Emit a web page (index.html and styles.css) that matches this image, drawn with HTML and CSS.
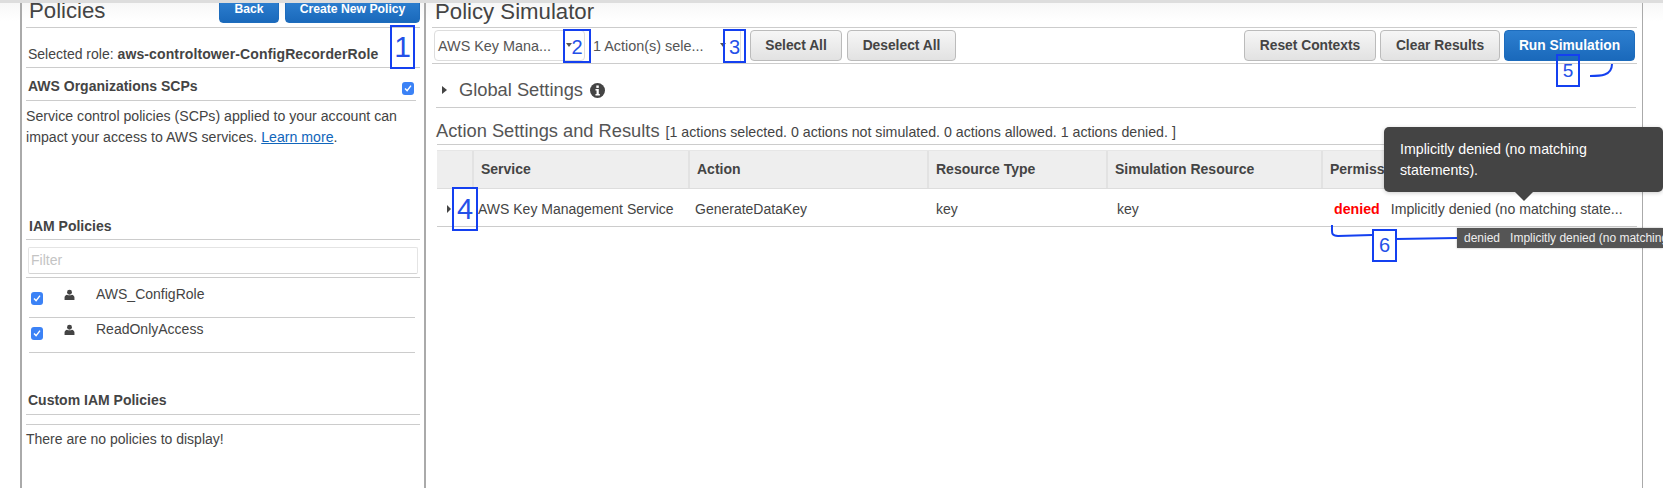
FILE: index.html
```html
<!DOCTYPE html>
<html lang="en">
<head>
<meta charset="utf-8">
<title>Policy Simulator</title>
<link rel="stylesheet" href="styles.css">
</head>
<body>
<div class="page">
  <div class="columns">
    <aside class="left">
      <div class="head left-head">
        <h1 class="title">Policies</h1>
        <div class="head-btns">
          <button class="btn primary back">Back</button>
          <button class="btn primary create">Create New Policy</button>
        </div>
      </div>
      <div class="role">Selected role: <b>aws-controltower-ConfigRecorderRole</b></div>
      <div class="scp-head"><b>AWS Organizations SCPs</b><span class="check scp-check"><svg viewBox="0 0 12 12"><path d="M3 6.4l2.1 2.2L9 3.6"/></svg></span></div>
      <p class="scp-text">Service control policies (SCPs) applied to your account can impact your access to AWS services. <a href="#">Learn more</a>.</p>
      <h2 class="sub iam">IAM Policies</h2>
      <div class="filter-wrap"><div class="filter">Filter</div></div>
      <ul class="policies">
        <li class="policy first"><span class="check"><svg viewBox="0 0 12 12"><path d="M3 6.4l2.1 2.2L9 3.6"/></svg></span><svg class="user" viewBox="0 0 12 12"><circle cx="6" cy="3" r="2.7"/><path d="M0.6 11.4V8.6C0.6 7 2 6 3.4 5.7 4.2 6.5 7.8 6.5 8.6 5.7 10 6 11.4 7 11.4 8.6V11.4Z"/></svg><span class="pname">AWS_ConfigRole</span></li>
        <li class="policy"><span class="check"><svg viewBox="0 0 12 12"><path d="M3 6.4l2.1 2.2L9 3.6"/></svg></span><svg class="user" viewBox="0 0 12 12"><circle cx="6" cy="3" r="2.7"/><path d="M0.6 11.4V8.6C0.6 7 2 6 3.4 5.7 4.2 6.5 7.8 6.5 8.6 5.7 10 6 11.4 7 11.4 8.6V11.4Z"/></svg><span class="pname">ReadOnlyAccess</span></li>
      </ul>
      <h2 class="sub custom">Custom IAM Policies</h2>
      <div class="none">There are no policies to display!</div>
    </aside>
    <main class="right">
      <div class="head right-head"><h1 class="title">Policy Simulator</h1></div>
      <div class="toolbar">
        <div class="selects">
          <div class="select s1"><span>AWS Key Mana...</span><i class="caret"></i></div>
          <div class="select s2"><span>1 Action(s) sele...</span><i class="caret"></i></div>
        </div>
        <button class="btn plain sel-all">Select All</button>
        <button class="btn plain desel-all">Deselect All</button>
        <div class="spacer"></div>
        <button class="btn plain reset">Reset Contexts</button>
        <button class="btn plain clear">Clear Results</button>
        <button class="btn primary run">Run Simulation</button>
      </div>
      <div class="global">
        <i class="tri"></i><span>Global Settings</span>
        <svg class="info" viewBox="0 0 14 14"><circle cx="7" cy="7" r="7"/><rect x="5.9" y="2.3" width="2.3" height="2.3" fill="#fff"/><path fill="#fff" d="M5.1 5.7h3.1v4.5h1v1.4H5.1v-1.4h1V7.1h-1z"/></svg>
      </div>
      <div class="results-head"><span class="rh-title">Action Settings and Results</span><span class="rh-note">[1 actions selected. 0 actions not simulated. 0 actions allowed. 1 actions denied. ]</span></div>
      <div class="table">
        <div class="thead">
          <div class="c c0"></div>
          <div class="c c1">Service</div>
          <div class="c c2">Action</div>
          <div class="c c3">Resource Type</div>
          <div class="c c4">Simulation Resource</div>
          <div class="c c5">Permission</div>
        </div>
        <div class="trow">
          <div class="c c0"><i class="tri small"></i></div>
          <div class="c c1">AWS Key Management Service</div>
          <div class="c c2">GenerateDataKey</div>
          <div class="c c3">key</div>
          <div class="c c4">key</div>
          <div class="c c5"><b class="denied">denied</b><span class="why">Implicitly denied (no matching state...</span></div>
        </div>
      </div>
    </main>
    <div class="gutter"></div>
  </div>

  <div class="tooltip">Implicitly denied (no matching statements).</div>
  <div class="tag"><span>denied</span><span>Implicitly denied (no matching statements).</span></div>

  <div class="mark m1">1</div>
  <div class="mark m2">2</div>
  <div class="mark m3">3</div>
  <div class="mark m4">4</div>
  <div class="mark m5">5</div>
  <div class="mark m6">6</div>
  <svg class="ink" viewBox="0 0 1663 488">
    <path d="M1590 76C1600 76 1612 76 1612 64"/>
    <path d="M1332 225C1332 233 1331 236 1338 236L1372 235"/>
    <path d="M1396 239L1457 238"/>
  </svg>
</div>
</body>
</html>
```
FILE: styles.css
```css
* { box-sizing: border-box; }
html, body { margin: 0; padding: 0; }
body { font-family: "Liberation Sans", Arial, sans-serif; color: #444; background: #fff; font-size: 14px; }
.page { position: relative; width: 1663px; height: 488px; overflow: hidden; border-top: 3px solid #ddd; background: linear-gradient(#f7f7f7, #fff 18px); }
.columns { display: flex; height: 485px; padding-left: 20px; }
.left { width: 406px; flex: none; border-left: 2px solid #aaa; border-right: 2px solid #aaa; padding: 0 4px; }
.right { width: 1217px; flex: none; border-right: 1px solid #aaa; padding: 0 5px 0 6px; }
.gutter { flex: 1; }
.head { height: 25px; border-bottom: 1px solid #ccc; display: flex; justify-content: space-between; align-items: flex-start; }
.title { margin: 0; padding-left: 3px; font-weight: 400; font-size: 22.2px; line-height: 20px; color: #444; }
.left-head .title { margin-top: -2px; }
.right-head .title { margin-top: -1px; }
.head-btns { display: flex; gap: 6px; }
.btn { font: bold 13.8px "Liberation Sans", Arial, sans-serif; border-radius: 4px; height: 31px; padding: 0; }
.primary { color: #fff; background: linear-gradient(#2d7fd0, #1a69bb); border: 1px solid #1d6cbd; }
.plain { color: #444; background: linear-gradient(#f6f6f6, #e2e2e2); border: 1px solid #bbb; }
.head-btns .btn { height: 23px; margin-top: -3px; padding-bottom: 5px; font-size: 12.2px; border-radius: 0 0 4px 4px; }
.back { width: 60px; }
.create { width: 135px; }
.role { height: 40px; padding: 18px 0 0 2px; border-bottom: 1px solid #ccc; line-height: 16px; }
.role b { letter-spacing: .12px; }
.scp-head { height: 33px; width: 390px; border-bottom: 1px solid #ccc; display: flex; justify-content: space-between; align-items: center; padding: 4px 0 0 2px; }
.check { width: 12px; height: 13px; border-radius: 3px; background: #3b82f6; display: block; flex: none; }
.check svg { display: block; width: 12px; height: 12px; fill: none; stroke: #fff; stroke-width: 1.4; }
.scp-check { margin: 4px 2px 0 0; }
.scp-text { margin: 5px 0 0; font-size: 14.15px; line-height: 21px; width: 394px; height: 112px; }
a { color: #1166bb; text-decoration: underline; }
.sub { margin: 0; font-size: 14px; font-weight: 700; padding-left: 2px; border-bottom: 1px solid #ccc; color: #444; line-height: 16px; }
.iam { height: 22px; padding-left: 3px; }
.filter-wrap { height: 38px; padding: 7px 2px 0 2px; border-bottom: 1px solid #ccc; }
.filter { height: 27px; border: 1px solid #e4e4e4; border-bottom-color: #d4d4d4; border-radius: 2px; color: #c4c4c4; font-size: 14px; line-height: 25px; padding-left: 2px; }
.policies { list-style: none; margin: 0; padding: 0 5px 0 3px; }
.policy { height: 35px; display: flex; align-items: flex-start; border-bottom: 1px solid #ccc; padding-top: 3px; }
.policy.first { height: 40px; padding-top: 8px; }
.policy .check { margin: 6px 0 0 2px; }
.user { width: 11px; height: 12px; fill: #444; margin: 3px 0 0 21px; flex: none; }
.pname { margin-left: 21px; line-height: 16px; }
.custom { margin-top: 40px; height: 22px; line-height: 14px; }
.none { margin-top: 9px; border-top: 1px solid #ccc; padding-top: 5px; line-height: 18px; }
.toolbar { height: 36px; display: flex; border-bottom: 1px solid #ccc; padding: 2px 0 0 2px; align-items: flex-start; }
.selects { display: flex; width: 307px; height: 31px; }
.select { position: relative; display: flex; align-items: center; color: #555; height: 31px; }
.s1 { width: 151px; padding-left: 3px; border: 1px solid #ddd; border-radius: 4px; font-size: 14.4px; }
.s2 { width: 156px; padding-left: 8px; border-right: 1px solid #ddd; font-size: 14.4px; }
.caret { position: absolute; width: 0; height: 0; border-left: 3.5px solid transparent; border-right: 3.5px solid transparent; border-top: 4px solid #555; }
.s1 .caret { right: 12px; top: 12px; }
.s2 .caret { right: 14px; top: 13px; }
.sel-all { width: 92px; margin-left: 9px; }
.desel-all { width: 109px; margin-left: 5px; }
.spacer { flex: 1; }
.reset { width: 132px; }
.clear { width: 120px; margin-left: 4px; }
.run { width: 131px; margin-left: 4px; margin-right: 2px; }
.global { height: 44px; width: 1200px; margin-left: 4px; padding: 9px 0 0 6px; border-bottom: 1px solid #ccc; display: flex; align-items: center; font-size: 18.3px; color: #555; }
.tri { width: 0; height: 0; border-top: 4.5px solid transparent; border-bottom: 4.5px solid transparent; border-left: 5px solid #444; display: block; }
.global span { margin-left: 12px; }
.info { width: 15px; height: 15px; fill: #444; margin-left: 7px; }
.results-head { margin-left: 5px; height: 37px; padding-top: 13px; border-bottom: 1px solid #ccc; display: flex; align-items: baseline; }
.rh-title { font-size: 18.3px; line-height: 20px; color: #555; margin-left: -1px; }
.rh-note { font-size: 14.2px; margin-left: 6px; color: #444; white-space: nowrap; }
.table { margin: 5px 0 0 5px; }
.thead, .trow { display: flex; }
.thead { height: 39px; background: #eee; border-top: 1px solid #e6e6e6; border-bottom: 1px solid #ddd; font-weight: 700; align-items: stretch; }
.thead .c { border-right: 2px solid #e2e2e2; line-height: 37px; padding-left: 7px; }
.trow { height: 38px; border-bottom: 1px solid #ccc; line-height: 40px; }
.c0 { width: 37px; flex: none; }
.c1 { width: 216px; flex: none; }
.c2 { width: 239px; flex: none; }
.c3 { width: 179px; flex: none; }
.c4 { width: 215px; flex: none; }
.c5 { flex: 1; white-space: nowrap; }
.thead .c5 { border-right: 0; }
.trow .c0 { position: relative; }
.tri.small { position: absolute; left: 10px; top: 16px; border-top-width: 4px; border-bottom-width: 4px; border-left-width: 4px; }
.trow .c1 { padding-left: 4px; }
.trow .c2 { padding-left: 5px; }
.trow .c3 { padding-left: 7px; }
.trow .c4 { padding-left: 9px; }
.trow .c5 { padding-left: 11px; }
.denied { color: #f00; font-size: 14.2px; }
.why { margin-left: 11px; font-size: 14.1px; color: #444; }
.tooltip { position: absolute; left: 1384px; top: 124px; width: 279px; height: 65px; background: #444; color: #fff; border-radius: 5px; padding: 12px 60px 0 16px; font-size: 14.2px; line-height: 21px; box-shadow: 0 1px 4px rgba(0,0,0,.2); }
.tooltip::after { content: ""; position: absolute; left: 131px; top: 65px; border-left: 9px solid transparent; border-right: 9px solid transparent; border-top: 9px solid #444; }
.tag { position: absolute; left: 1457px; top: 225px; width: 206px; height: 20px; background: #555; color: #eee; font-size: 12px; line-height: 20px; padding-left: 7px; white-space: nowrap; overflow: hidden; display: flex; gap: 10px; box-shadow: 0 0 2px rgba(0,0,0,.3); }
.mark { position: absolute; border: 2px solid #1440f0; color: #2450e8; display: flex; align-items: center; justify-content: center; font-weight: 400; }
.m1 { left: 390px; top: 22px; width: 25px; height: 44px; font-size: 30px; }
.m2 { left: 563px; top: 26px; width: 28px; height: 34px; font-size: 20px; padding-top: 3px; }
.m3 { left: 723px; top: 26px; width: 23px; height: 34px; font-size: 20px; padding-top: 3px; }
.m4 { left: 452px; top: 184px; width: 26px; height: 44px; font-size: 29px; }
.m5 { left: 1556px; top: 51px; width: 24px; height: 33px; font-size: 19px; }
.m6 { left: 1372px; top: 226px; width: 25px; height: 33px; font-size: 20px; }
.ink { position: absolute; left: 0; top: -3px; width: 1663px; height: 488px; fill: none; stroke: #1440f0; stroke-width: 2; pointer-events: none; }
```
